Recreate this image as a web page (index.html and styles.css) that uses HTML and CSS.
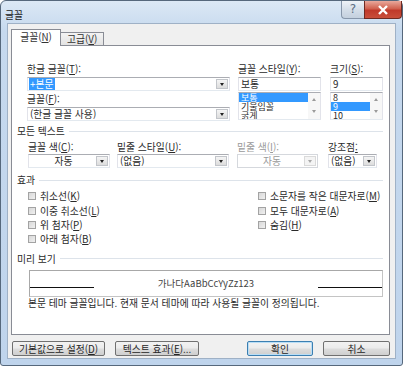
FILE: index.html
```html
<!DOCTYPE html>
<html lang="ko">
<head>
<meta charset="UTF-8">
<title>글꼴</title>
<link rel="stylesheet" href="styles.css">
</head>
<body>
<div class="window">
    <div class="titlebar">
        <span class="title">글꼴</span>
        <div class="caption-buttons">
            <span class="cap-help">?</span>
            <span class="cap-close">
                <svg width="12" height="10" viewBox="0 0 12 10"><path d="M2 1 L10 9 M10 1 L2 9" stroke="#fff" stroke-width="2.4"/></svg>
            </span>
        </div>
    </div>
    <div class="client">
        <div class="tabs">
            <div class="tab active">글꼴(<u>N</u>)</div>
            <div class="tab">고급(<u>V</u>)</div>
        </div>
        <div class="panel">
            <div class="font-row">
                <div class="field">
                    <div class="label">한글 글꼴(<u>T</u>):</div>
                    <div class="combo"><span class="sel">+본문</span><span class="arrow"></span></div>
                    <div class="label second">글꼴(<u>F</u>):</div>
                    <div class="combo"><span class="value">(한글 글꼴 사용)</span><span class="arrow"></span></div>
                </div>
                <div class="field">
                    <div class="label">글꼴 스타일(<u>Y</u>):</div>
                    <div class="textbox">보통</div>
                    <div class="listbox">
                        <div class="items">
                            <div class="item selected">보통</div>
                            <div class="item">기울임꼴</div>
                            <div class="item">굵게</div>
                        </div>
                        <div class="vscroll"><span class="up"></span><span class="down"></span></div>
                    </div>
                </div>
                <div class="field">
                    <div class="label">크기(<u>S</u>):</div>
                    <div class="textbox">9</div>
                    <div class="listbox">
                        <div class="items">
                            <div class="item">8</div>
                            <div class="item selected">9</div>
                            <div class="item">10</div>
                        </div>
                        <div class="vscroll"><span class="up"></span><span class="down"></span></div>
                    </div>
                </div>
            </div>

            <div class="group"><span>모든 텍스트</span></div>
            <div class="text-row">
                <div class="field">
                    <div class="label">글꼴 색(<u>C</u>):</div>
                    <div class="combo"><span class="value center">자동</span><span class="arrow"></span></div>
                </div>
                <div class="field">
                    <div class="label">밑줄 스타일(<u>U</u>):</div>
                    <div class="combo"><span class="value">(없음)</span><span class="arrow"></span></div>
                </div>
                <div class="field disabled">
                    <div class="label">밑줄 색(<u>I</u>):</div>
                    <div class="combo"><span class="value center">자동</span><span class="arrow"></span></div>
                </div>
                <div class="field">
                    <div class="label">강조점<u>:</u></div>
                    <div class="combo"><span class="value">(없음)</span><span class="arrow"></span></div>
                </div>
            </div>

            <div class="group"><span>효과</span></div>
            <div class="effects">
                <label class="check"><span class="box"></span><span>취소선(<u>K</u>)</span></label>
                <label class="check"><span class="box"></span><span>소문자를 작은 대문자로(<u>M</u>)</span></label>
                <label class="check"><span class="box"></span><span>이중 취소선(<u>L</u>)</span></label>
                <label class="check"><span class="box"></span><span>모두 대문자로(<u>A</u>)</span></label>
                <label class="check"><span class="box"></span><span>위 첨자(<u>P</u>)</span></label>
                <label class="check"><span class="box"></span><span>숨김(<u>H</u>)</span></label>
                <label class="check"><span class="box"></span><span>아래 첨자(<u>B</u>)</span></label>
            </div>

            <div class="group"><span>미리 보기</span></div>
            <div class="preview">
                <span class="rule"></span>
                <span class="sample">가나다AaBbCcYyZz123</span>
                <span class="rule"></span>
            </div>
            <div class="note">본문 테마 글꼴입니다. 현재 문서 테마에 따라 사용될 글꼴이 정의됩니다.</div>
        </div>
        <div class="buttons">
            <button class="btn b-default">기본값으로 설정(<u>D</u>)</button>
            <button class="btn b-effects">텍스트 효과(<u>E</u>)...</button>
            <button class="btn b-ok">확인</button>
            <button class="btn b-cancel">취소</button>
        </div>
    </div>
</div>
</body>
</html>
```

FILE: styles.css
```css
* {
    box-sizing: border-box;
}

body {
    margin: 0;
    background: #fff;
    font-family: "Noto Sans CJK KR", "Noto Sans", sans-serif;
    font-size: 9.8px;
    color: #2a2a2a;
}

u {
    text-decoration: underline;
    text-underline-offset: 1px;
}

.window {
    width: 403px;
    height: 366px;
    border: 1px solid #56687c;
    border-radius: 6px 6px 3px 3px;
    background: linear-gradient(#dce8f5, #c6d9ee 30px, #bfd4ec);
    padding: 0 6px 6px;
    display: flex;
    flex-direction: column;
}

.titlebar {
    height: 22px;
    display: flex;
    align-items: flex-start;
}

.title {
    margin-left: -2px;
    padding-top: 8px;
    line-height: 12px;
    color: #1a1a1a;
}

.caption-buttons {
    margin-left: auto;
    margin-right: -6px;
    display: flex;
}

.cap-help {
    width: 23px;
    height: 18px;
    border: 1px solid #8796aa;
    border-top: none;
    border-right: none;
    border-radius: 0 0 0 4px;
    background: linear-gradient(#eef2f7, #d5dee9 50%, #c4d0de);
    color: #5d6d82;
    font-family: "DejaVu Sans", sans-serif;
    font-size: 12px;
    line-height: 17px;
    text-align: center;
}

.cap-close {
    width: 38px;
    height: 18px;
    border: 1px solid #6f2a22;
    border-top: none;
    border-radius: 0 0 4px 0;
    background: linear-gradient(#e9a99c, #d0614f 45%, #c0392a 55%, #c94e3a);
    display: flex;
    align-items: center;
    justify-content: center;
}

.client {
    flex: 1;
    background: #f0f0f0;
    border: 1px solid #9fb1c6;
    padding: 5px 0 0 3px;
}

.tabs {
    display: flex;
    align-items: flex-end;
    height: 16px;
}

.tab {
    height: 13px;
    padding: 0 6px;
    border: 1px solid #898c95;
    border-bottom: none;
    border-left: none;
    background: linear-gradient(#f3f3f3, #e3e3e3);
    line-height: 12px;
    color: #333;
}

.tab.active {
    height: 17px;
    width: 50px;
    margin-bottom: -1px;
    border-left: 1px solid #898c95;
    background: #fff;
    text-align: center;
    line-height: 15px;
    position: relative;
    z-index: 1;
}

.panel {
    width: 379px;
    height: 290px;
    background: #fff;
    border: 1px solid #898c95;
    padding-top: 17px;
}

.label {
    height: 12px;
    line-height: 12px;
    white-space: nowrap;
}

.label.second {
    margin-top: 2px;
}

.font-row {
    display: grid;
    grid-template-columns: 202px 83px 53px;
    column-gap: 9px;
    padding-left: 15px;
}

.font-row .field:first-child {
    margin-right: -1px;
}

.combo,
.textbox {
    height: 14px;
    margin-top: 2px;
    border: 1px solid #abadb3;
    border-color: #abadb3 #e2e3ea #e3e9ef #e2e3ea;
    background: #fff;
    display: flex;
    align-items: center;
    line-height: 12px;
    white-space: nowrap;
}

.textbox {
    padding-left: 2px;
}

.combo .sel {
    margin-left: 1px;
    padding: 0 1px;
    background: #3399ff;
    color: #fff;
    width: 26px;
}

.combo .value {
    flex: 1;
    padding-left: 2px;
}

.combo .value.center {
    text-align: center;
}

.combo .arrow {
    margin-left: auto;
    width: 12px;
    height: 10px;
    margin-right: 1px;
    border: 1px solid #c2c5ca;
    background: linear-gradient(#f5f5f5, #dcdcdc);
    position: relative;
}

.combo .arrow::after {
    content: "";
    position: absolute;
    left: 3px;
    top: 3px;
    border-left: 2.5px solid transparent;
    border-right: 2.5px solid transparent;
    border-top: 3px solid #222;
}

.listbox {
    height: 28px;
    margin-top: 1px;
    border: 1px solid #abadb3;
    border-color: #abadb3 #e2e3ea #e3e9ef #e2e3ea;
    display: flex;
    overflow: hidden;
}

.items {
    flex: 1;
}

.item {
    height: 9px;
    line-height: 9px;
    font-size: 9px;
    padding-left: 2px;
    white-space: nowrap;
    overflow: hidden;
}

.item.selected {
    background: #3399ff;
    color: #fff;
}

.vscroll {
    width: 12px;
    background: #f7f7f7;
    display: flex;
    flex-direction: column;
    justify-content: space-between;
    align-items: center;
    padding: 5px 0 6px;
}

.vscroll .up {
    border-left: 2.5px solid transparent;
    border-right: 2.5px solid transparent;
    border-bottom: 3px solid #9a9a9a;
}

.vscroll .down {
    border-left: 2.5px solid transparent;
    border-right: 2.5px solid transparent;
    border-top: 3px solid #9a9a9a;
}

.group {
    margin: 4px 6px 0 5px;
    height: 12px;
    line-height: 12px;
    display: flex;
    align-items: center;
    gap: 4px;
}

.group::after {
    content: "";
    flex: 1;
    border-top: 1px solid #dde3ea;
}

.text-row {
    margin-top: 4px;
    padding-left: 16px;
    display: grid;
    grid-template-columns: 82px 111px 81px 51px;
    column-gap: 8px;
}

.text-row .combo {
    margin-top: 1px;
}

.text-row .field:nth-child(2) {
    margin-left: -1px;
}

.text-row .field:nth-child(4) {
    margin-left: 2px;
}

.disabled .label,
.disabled .value {
    color: #9a9a9a;
}

.disabled .combo {
    border-color: #d5d8dd;
}

.disabled .arrow {
    border-color: #dadada;
    background: #f4f4f4;
}

.disabled .arrow::after {
    border-top-color: #a8a8a8;
}

.text-row + .group {
    margin-top: 6px;
}

.effects {
    margin-top: 3px;
    padding-left: 16px;
    display: grid;
    grid-template-columns: 230px auto;
    grid-auto-rows: 14.4px;
}

.check {
    display: flex;
    align-items: center;
    gap: 4px;
    white-space: nowrap;
}

.check .box {
    width: 8px;
    height: 8px;
    border: 1px solid #a3a3a3;
    background: linear-gradient(135deg, #d8d8d8, #f0f0f0);
}

.effects + .group {
    margin-top: 6px;
}

.preview {
    margin: 5px 0 0 17px;
    width: 354px;
    height: 27px;
    border: 1px solid #a0a0a0;
    border-color: #a8a8a8 #c4c4c4 #c4c4c4 #a8a8a8;
    display: flex;
    align-items: center;
}

.preview .rule {
    width: 64px;
    height: 1px;
    margin-top: 8px;
    background: #111;
}

.preview .sample {
    flex: 1;
    text-align: center;
    font-size: 9.5px;
    color: #444;
}

.note {
    margin-left: 16px;
    height: 12px;
    line-height: 12px;
}

.buttons {
    margin-top: 6px;
    display: flex;
}

.btn {
    height: 15px;
    padding: 0;
    font-family: inherit;
    font-size: 9.8px;
    color: #262626;
    border: 1px solid #707070;
    border-radius: 2px;
    background: linear-gradient(#f2f2f2, #ebebeb 48%, #dddddd 52%, #cfcfcf);
    line-height: 12px;
}

.b-default {
    width: 93px;
    margin-left: 1px;
}

.b-effects {
    width: 84px;
    margin-left: 10px;
}

.b-ok {
    width: 66px;
    margin-left: 48px;
    border-color: #3c7fb1;
    box-shadow: inset 0 0 0 1px #b9def6;
}

.b-cancel {
    width: 67px;
    margin-left: 10px;
}
```
